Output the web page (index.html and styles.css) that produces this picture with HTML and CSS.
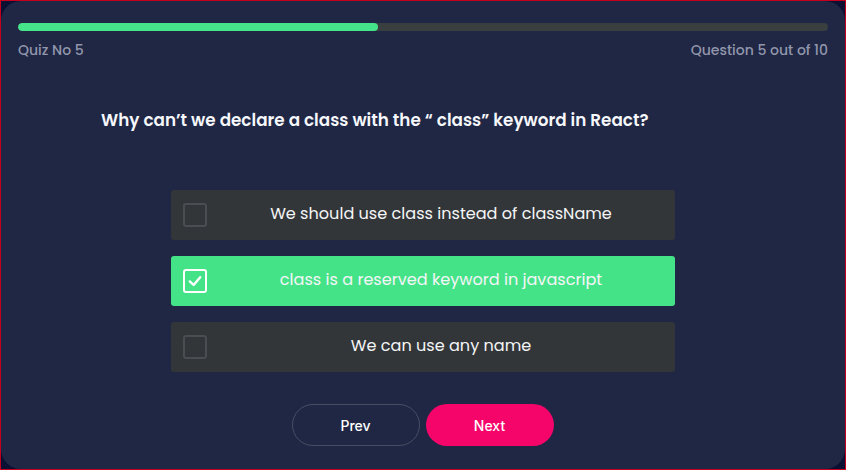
FILE: index.html
```html
<!DOCTYPE html>
<html>
<head>
<meta charset="utf-8">
<link rel="stylesheet" href="styles.css">
</head>
<body>
<div class="frame">
  <div class="card">
    <div class="progress"><div class="progress-fill" style="width: 44.5%"></div></div>
    <div class="meta">
      <span>Quiz No 5</span>
      <span>Question 5 out of 10</span>
    </div>
    <h1 class="question">Why can’t we declare a class with the “ class” keyword in React?</h1>
    <div class="options">
      <div class="option">
        <span class="box"></span>
        <span class="label">We should use class instead of className</span>
      </div>
      <div class="option selected">
        <span class="box">
          <svg width="14" height="14" viewBox="0 0 14 14"><path d="M1.8 7.4 L5.6 11 L12.2 3.2" fill="none" stroke="#fff" stroke-width="2.4" stroke-linecap="round" stroke-linejoin="round"/></svg>
        </span>
        <span class="label">class is a reserved keyword in javascript</span>
      </div>
      <div class="option">
        <span class="box"></span>
        <span class="label">We can use any name</span>
      </div>
    </div>
    <div class="actions">
      <button class="btn btn-prev">Prev</button>
      <button class="btn btn-next">Next</button>
    </div>
  </div>
</div>
</body>
</html>
```

FILE: styles.css
```css
* { box-sizing: border-box; }
html, body { margin: 0; padding: 0; }
body {
  font-family: "Poppins", "Open Sans", "DejaVu Sans", sans-serif;
  background: #0c1033;
}
.frame {
  width: 846px;
  height: 470px;
  border: 1px solid #c4001c;
  background: #0c1033;
}
.card {
  height: 100%;
  background: #1f2745;
  border-radius: 20px;
  padding: 22px 17px 0;
  display: flex;
  flex-direction: column;
}
.progress {
  height: 8px;
  border-radius: 4px;
  background: #393e3e;
  overflow: hidden;
}
.progress-fill {
  height: 100%;
  background: #46e48a;
  border-radius: 4px;
}
.meta {
  display: flex;
  justify-content: space-between;
  margin-top: 10px;
  font-size: 14px;
  font-weight: 500;
  color: #9296ab;
  line-height: 18px;
}
.question {
  margin: 49px 0 0 83px;
  font-size: 16.8px;
  font-weight: 600;
  color: #f6f7fb;
  line-height: 24px;
}
.options {
  margin: 58px auto 0;
  width: 504px;
  display: flex;
  flex-direction: column;
  gap: 16px;
}
.option {
  height: 50px;
  background: #333639;
  border-radius: 3px;
  display: flex;
  align-items: center;
  padding: 0 0 0 12px;
}
.option .box {
  width: 24px;
  height: 24px;
  border: 2px solid #4a4d51;
  border-radius: 3px;
  display: flex;
  align-items: center;
  justify-content: center;
  flex: none;
}
.option .label {
  flex: 1;
  text-align: center;
  color: #f4f5f7;
  font-size: 16.1px;
  font-weight: 400;
  margin-top: -4px;
}
.option.selected { background: #45e388; }
.option.selected .box { border-color: #ffffff; border-width: 2.5px; }
.actions {
  margin-top: 32px;
  display: flex;
  justify-content: center;
  gap: 6px;
  padding-right: 1px;
}
.btn {
  width: 128px;
  height: 42px;
  border-radius: 21px;
  font-family: "Inter", "Liberation Sans", sans-serif;
  font-size: 14px;
  font-weight: 500;
  color: #ffffff;
  cursor: pointer;
}
.btn-prev {
  background: transparent;
  border: 1px solid #474e62;
}
.btn-next {
  background: #f5056a;
  border: none;
}
```
